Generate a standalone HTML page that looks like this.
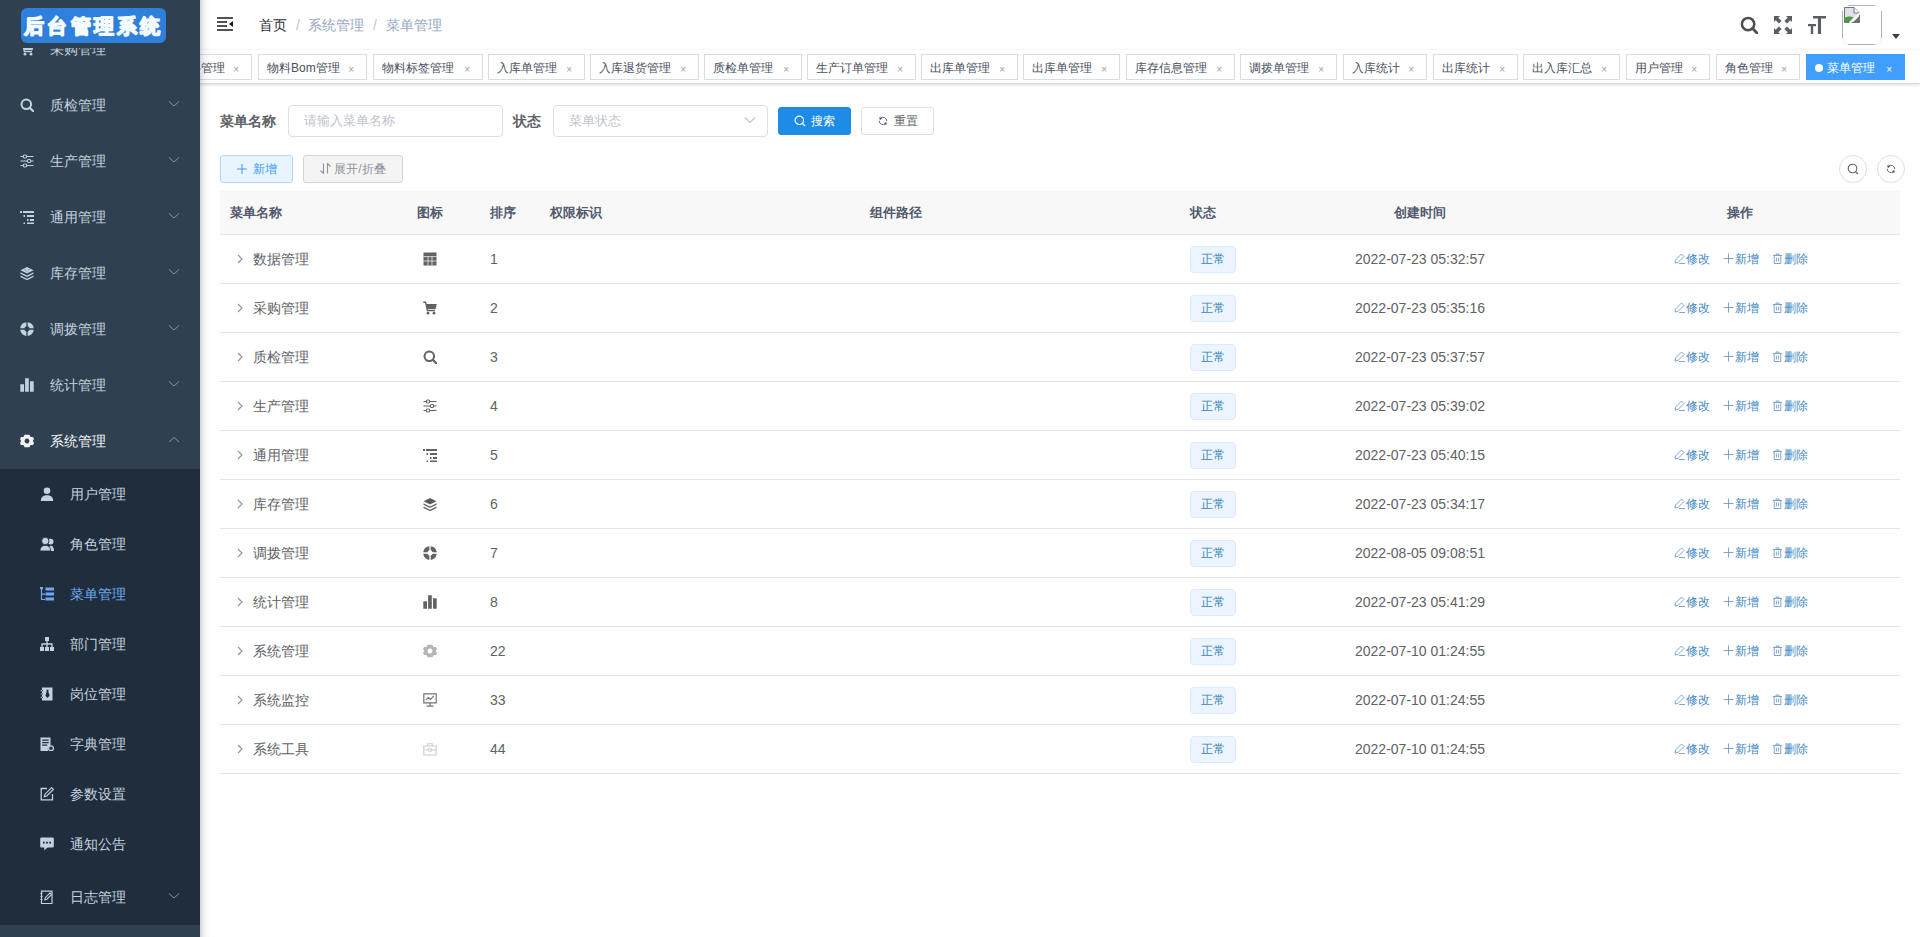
<!DOCTYPE html>
<html><head><meta charset="utf-8"><style>
*{box-sizing:border-box;margin:0;padding:0}
html,body{width:1920px;height:937px;overflow:hidden;background:#fff;font-family:"Liberation Sans",sans-serif;color:#606266}
.abs{position:absolute}
#side{position:absolute;left:0;top:0;width:200px;height:937px;background:#2f4151;overflow:hidden;z-index:5}
#shadow{position:absolute;left:200px;top:0;width:10px;height:937px;background:linear-gradient(to right,rgba(0,21,41,.18),rgba(0,21,41,.06) 40%,rgba(0,21,41,0));z-index:6}
.tx{position:absolute;font-size:14px;white-space:nowrap}
#nav{position:absolute;left:200px;top:0;width:1720px;height:50px;background:#fff}
#tags{position:absolute;left:200px;top:50px;width:1720px;height:34px;background:#fff;border-bottom:1px solid #d8dce5;box-shadow:0 1px 3px 0 rgba(0,0,0,.12),0 0 3px 0 rgba(0,0,0,.04);overflow:hidden}
.tg{position:absolute;top:4px;height:26px;border:1px solid #d8dce5;color:#495060;background:#fff;font-size:12px;line-height:27px;padding-left:8px;white-space:nowrap}
.tg .x{position:absolute;right:12px;top:1px;font-size:10px;color:#9a9ea6}
.tg.act{background:#409eff;border-color:#409eff;color:#fff}
.tg.act .x{color:#fff}
.tg.act:before{content:"";display:inline-block;width:8px;height:8px;border-radius:50%;background:#fff;margin-right:4px;vertical-align:0}
.bc{position:absolute;top:0;line-height:50px;font-size:14px;color:#97a8be}
.lbl{position:absolute;top:105px;line-height:32px;font-size:14px;font-weight:bold;color:#606266}
.inp{position:absolute;top:105px;height:32px;border:1px solid #dcdfe6;border-radius:4px;background:#fff;font-size:13px;color:#c0c4cc;line-height:30px;padding-left:15px}
.btn{position:absolute;height:28px;border-radius:3px;font-size:12px;line-height:26px;text-align:center;border:1px solid #dcdfe6;white-space:nowrap}
.cbtn{position:absolute;top:155px;width:28px;height:28px;border-radius:50%;border:1px solid #dcdfe6;background:#fff}
.th{position:absolute;left:220px;top:191px;width:1680px;height:44px;background:#f8f8f9;border-bottom:1px solid #e3e6e9}
.thx{position:absolute;top:191px;line-height:43px;font-size:13px;font-weight:bold;color:#515a6e;white-space:nowrap}
.tr{position:absolute;left:220px;width:1680px;height:49px;border-bottom:1px solid #e3e6e9;background:#fff}
.td{position:absolute;line-height:48px;font-size:14px;color:#606266;white-space:nowrap}
.tag{position:absolute;left:1190px;width:46px;height:27px;background:#ecf5ff;border:1px solid #d9ecff;border-radius:4px;color:#3a85b5;font-size:12px;line-height:25px;text-align:center}
.op{position:absolute;line-height:48px;font-size:12px;color:#3f88c5;white-space:nowrap}

</style></head><body>
<div id="side">
<div class="tx" style="left:50px;top:21px;line-height:56px;color:#c6d1de">采购管理</div>
<svg class="abs" style="left:20px;top:42px;color:#c6d1de" width="14" height="14" viewBox="0 0 14 14"><path d="M0.3 1.2H2.6L4.4 9.6H12" fill="none" stroke="currentColor" stroke-width="1.4"/><path d="M3.2 3H13.8L12.6 8.2H4.3Z" fill="currentColor"/><circle cx="5" cy="12.2" r="1.4" fill="currentColor"/><circle cx="11" cy="12.2" r="1.4" fill="currentColor"/></svg>
<div class="tx" style="left:50px;top:77px;line-height:56px;color:#c6d1de">质检管理</div>
<svg class="abs" style="left:20px;top:98px;color:#c6d1de" width="14" height="14" viewBox="0 0 14 14"><circle cx="6.3" cy="6.3" r="4.8" fill="none" stroke="currentColor" stroke-width="2"/><path d="M9.8 9.8L13.6 13.6" stroke="currentColor" stroke-width="2.2" stroke-linecap="round"/></svg>
<svg class="abs" style="left:168px;top:100px" width="12" height="8" viewBox="0 0 12 8"><path d="M1 1.5L6 6L11 1.5" fill="none" stroke="#8592a3" stroke-width="1"/></svg>
<div class="tx" style="left:50px;top:133px;line-height:56px;color:#c6d1de">生产管理</div>
<svg class="abs" style="left:20px;top:154px;color:#c6d1de" width="14" height="14" viewBox="0 0 14 14"><path d="M0.5 2.5H3.3M6.7 2.5H13.5M0.5 7H7.3M10.7 7H13.5M0.5 11.5H3.3M6.7 11.5H13.5" stroke="currentColor" stroke-width="1.2"/><rect x="3.3" y="1" width="3.4" height="3" fill="none" stroke="currentColor" stroke-width="1.1" rx="1.2"/><rect x="7.3" y="5.5" width="3.4" height="3" fill="none" stroke="currentColor" stroke-width="1.1" rx="1.2"/><rect x="3.3" y="10" width="3.4" height="3" fill="none" stroke="currentColor" stroke-width="1.1" rx="1.2"/></svg>
<svg class="abs" style="left:168px;top:156px" width="12" height="8" viewBox="0 0 12 8"><path d="M1 1.5L6 6L11 1.5" fill="none" stroke="#8592a3" stroke-width="1"/></svg>
<div class="tx" style="left:50px;top:189px;line-height:56px;color:#c6d1de">通用管理</div>
<svg class="abs" style="left:20px;top:210px;color:#c6d1de" width="14" height="14" viewBox="0 0 14 14"><path d="M0 1h2v2H0zM3 1h11v2H3zM3.5 5H5v2H3.5zM7 5h7v2H7zM7 9h1.5v2H7zM10 9h4v2h-4zM3.5 12.5H5v2H3.5zM7 12.5h7v2H7z" fill="currentColor"/></svg>
<svg class="abs" style="left:168px;top:212px" width="12" height="8" viewBox="0 0 12 8"><path d="M1 1.5L6 6L11 1.5" fill="none" stroke="#8592a3" stroke-width="1"/></svg>
<div class="tx" style="left:50px;top:245px;line-height:56px;color:#c6d1de">库存管理</div>
<svg class="abs" style="left:20px;top:266px;color:#c6d1de" width="14" height="14" viewBox="0 0 14 14"><path d="M7 1L13.5 4.2L7 7.4L0.5 4.2Z" fill="currentColor"/><path d="M0.5 6.3L7 9.5L13.5 6.3V7.8L7 11L0.5 7.8Z" fill="currentColor"/><path d="M0.5 9.6L7 12.8L13.5 9.6V11L7 14.2L0.5 11Z" fill="currentColor"/><path d="M4.5 3.6l1.5 .7M8 4.1l1.5-.7M6.4 5.2l1.2 .6" stroke="#0006" stroke-width="0.9"/></svg>
<svg class="abs" style="left:168px;top:268px" width="12" height="8" viewBox="0 0 12 8"><path d="M1 1.5L6 6L11 1.5" fill="none" stroke="#8592a3" stroke-width="1"/></svg>
<div class="tx" style="left:50px;top:301px;line-height:56px;color:#c6d1de">调拨管理</div>
<svg class="abs" style="left:20px;top:322px;color:#c6d1de" width="14" height="14" viewBox="0 0 14 14"><path fill="currentColor" fill-rule="evenodd" d="M7 0.2A6.8 6.8 0 1 1 6.99 0.2ZM7 4.3A2.7 2.7 0 1 0 7.01 4.3Z"/><path d="M7 0V14M0 7H14" stroke="#2f4151" stroke-width="1.3"/></svg>
<svg class="abs" style="left:168px;top:324px" width="12" height="8" viewBox="0 0 12 8"><path d="M1 1.5L6 6L11 1.5" fill="none" stroke="#8592a3" stroke-width="1"/></svg>
<div class="tx" style="left:50px;top:357px;line-height:56px;color:#c6d1de">统计管理</div>
<svg class="abs" style="left:20px;top:378px;color:#c6d1de" width="14" height="14" viewBox="0 0 14 14"><path d="M0.3 6.3h3.7v7.4H0.3zM5.1 0.3h3.7v13.4H5.1zM10 3.3h3.7v10.4H10z" fill="currentColor"/></svg>
<svg class="abs" style="left:168px;top:380px" width="12" height="8" viewBox="0 0 12 8"><path d="M1 1.5L6 6L11 1.5" fill="none" stroke="#8592a3" stroke-width="1"/></svg>
<div class="tx" style="left:50px;top:413px;line-height:56px;color:#f4f4f5">系统管理</div>
<svg class="abs" style="left:20px;top:434px;color:#f4f4f5" width="14" height="14" viewBox="0 0 14 14"><path fill="currentColor" fill-rule="evenodd" d="M4.6 0.8h4.8l1.2 2.1 2.4 .1 1 2.1-1.2 1.9 1.2 1.9-1 2.1-2.4 .1-1.2 2.1H4.6l-1.2-2.1-2.4-.1-1-2.1L1.2 7 0 5.1l1-2.1 2.4-.1zM7 4.6A2.4 2.4 0 1 0 7.01 4.6Z"/></svg>
<svg class="abs" style="left:168px;top:436px" width="12" height="8" viewBox="0 0 12 8"><path d="M1 6L6 1.5L11 6" fill="none" stroke="#8592a3" stroke-width="1"/></svg>
<div class="abs" style="left:0;top:469px;width:200px;height:456px;background:#1f2d3d"></div>
<div class="tx" style="left:70px;top:469px;line-height:50px;color:#c6d1de">用户管理</div>
<svg class="abs" style="left:40px;top:487px;color:#c6d1de" width="14" height="14" viewBox="0 0 14 14"><circle cx="7" cy="3.8" r="3.3" fill="currentColor"/><path d="M0.8 14C0.8 9.6 3.6 8.2 7 8.2S13.2 9.6 13.2 14Z" fill="currentColor"/></svg>
<div class="tx" style="left:70px;top:519px;line-height:50px;color:#c6d1de">角色管理</div>
<svg class="abs" style="left:40px;top:537px;color:#c6d1de" width="14" height="14" viewBox="0 0 14 14"><circle cx="10.6" cy="4.6" r="2.9" fill="currentColor"/><path d="M8.5 14C8.5 10.2 9.6 8.8 11 8.8S14 10.2 14 14Z" fill="currentColor"/><circle cx="5.3" cy="4" r="3.7" fill="currentColor" stroke="#1f2d3d" stroke-width="0.9"/><path d="M0 14C0 9.8 2.4 8.4 5.3 8.4S10.6 9.8 10.6 14Z" fill="currentColor" stroke="#1f2d3d" stroke-width="0.9"/></svg>
<div class="tx" style="left:70px;top:569px;line-height:50px;color:#6eaaf3">菜单管理</div>
<svg class="abs" style="left:40px;top:587px;color:#6eaaf3" width="14" height="14" viewBox="0 0 14 14"><path d="M1.5 1v12M1.5 7.2H5M1.5 12.5H5" stroke="currentColor" stroke-width="1.2" fill="none"/><rect x="0" y="0" width="3" height="2.2" fill="currentColor"/><path d="M5.5 0.5h8.5v3H5.5zM5.5 5.5h8.5v3H5.5zM5.5 10.5h8.5v3H5.5z" fill="currentColor"/></svg>
<div class="tx" style="left:70px;top:619px;line-height:50px;color:#c6d1de">部门管理</div>
<svg class="abs" style="left:40px;top:637px;color:#c6d1de" width="14" height="14" viewBox="0 0 14 14"><path d="M5 0h4v4H5zM0 10h4v4H0zM5 10h4v4H5zM10 10h4v4h-4z" fill="currentColor"/><path d="M7 4v6M2 10V7h10v3" stroke="currentColor" stroke-width="1.3" fill="none"/></svg>
<div class="tx" style="left:70px;top:669px;line-height:50px;color:#c6d1de">岗位管理</div>
<svg class="abs" style="left:40px;top:687px;color:#c6d1de" width="14" height="14" viewBox="0 0 14 14"><path fill="currentColor" fill-rule="evenodd" d="M2 0.5h10.5v13H2zM0.8 3h2v1.2h-2zM0.8 6.4h2v1.2h-2zM0.8 9.8h2v1.2h-2zM6.2 2.8h2.6l-.6 1.3 1.4 4.7-2.1 2.2-2.1-2.2 1.4-4.7z"/></svg>
<div class="tx" style="left:70px;top:719px;line-height:50px;color:#c6d1de">字典管理</div>
<svg class="abs" style="left:40px;top:737px;color:#c6d1de" width="14" height="14" viewBox="0 0 14 14"><path fill="currentColor" fill-rule="evenodd" d="M0.5 0.5h10v8.2a3.6 3.6 0 0 0-1.8 5.8H0.5zM2.2 2.5h6.5v1.3H2.2zM2.2 5h6.5v1.3H2.2zM2.2 7.5h5v1.3h-5z"/><circle cx="11" cy="11.2" r="2.4" fill="none" stroke="currentColor" stroke-width="1.3"/></svg>
<div class="tx" style="left:70px;top:769px;line-height:50px;color:#c6d1de">参数设置</div>
<svg class="abs" style="left:40px;top:787px;color:#c6d1de" width="14" height="14" viewBox="0 0 14 14"><path d="M7 1.5H1.2v11.3h11.3V7" fill="none" stroke="currentColor" stroke-width="1.3"/><path d="M11.6 0.6l1.8 1.8-6.6 6.6-2.4 .6.6-2.4z" fill="none" stroke="currentColor" stroke-width="1.2"/></svg>
<div class="tx" style="left:70px;top:819px;line-height:50px;color:#c6d1de">通知公告</div>
<svg class="abs" style="left:40px;top:837px;color:#c6d1de" width="14" height="14" viewBox="0 0 14 14"><path fill="currentColor" fill-rule="evenodd" d="M1.5 0.5h11a1.3 1.3 0 0 1 1.3 1.3v7.4a1.3 1.3 0 0 1-1.3 1.3H7.5L4.3 13.6V10.5H1.5A1.3 1.3 0 0 1 .2 9.2V1.8A1.3 1.3 0 0 1 1.5 .5zM3 4.7h1.8v1.8H3zM6.1 4.7h1.8v1.8H6.1zM9.2 4.7h1.8v1.8H9.2z"/></svg>
<div class="tx" style="left:70px;top:872px;line-height:50px;color:#c6d1de">日志管理</div>
<svg class="abs" style="left:40px;top:890px;color:#c6d1de" width="14" height="14" viewBox="0 0 14 14"><path d="M1.5 1.2h10.5v12.3H1.5z" fill="none" stroke="currentColor" stroke-width="1.2"/><path d="M0.5 3.5h2M0.5 6.5h2M0.5 9.5h2" stroke="currentColor" stroke-width="1"/><path d="M10 2.8l1.6 1.6-4.8 4.8-2 .5.5-2z" fill="none" stroke="currentColor" stroke-width="1.1"/></svg>
<svg class="abs" style="left:168px;top:892px" width="12" height="8" viewBox="0 0 12 8"><path d="M1 1.5L6 6L11 1.5" fill="none" stroke="#8592a3" stroke-width="1"/></svg>
<div class="abs" style="left:0;top:0;width:200px;height:48px;background:#2f4151"></div>
<svg class="abs" style="left:0;top:0" width="200" height="50"><rect x="21" y="8" width="145" height="35" rx="6" fill="#2f7fdc"/><text x="24" y="32.8" font-family="Liberation Sans, sans-serif" font-size="20" font-weight="bold" letter-spacing="3.3" fill="#f4fbff" stroke="#f4fbff" stroke-width="1.5" stroke-linejoin="round">后台管理系统</text></svg>
</div>
<div id="nav"></div>
<svg class="abs" style="left:217px;top:17px" width="16" height="14" viewBox="0 0 16 14"><path d="M0 1h16M0 5h10M0 9h10M0 13h16" stroke="#1a1a1a" stroke-width="1.4"/><path d="M16 4V10L12 7Z" fill="#1a1a1a"/></svg>
<div class="bc" style="left:259px;color:#303133">首页</div>
<div class="bc" style="left:296px;color:#c0c4cc">/</div>
<div class="bc" style="left:308px">系统管理</div>
<div class="bc" style="left:373px;color:#c0c4cc">/</div>
<div class="bc" style="left:386px">菜单管理</div>
<svg class="abs" style="left:1740px;top:16px;color:#4d4f53" width="18" height="18" viewBox="0 0 14 14"><circle cx="6.3" cy="6.3" r="4.8" fill="none" stroke="currentColor" stroke-width="2"/><path d="M9.8 9.8L13.6 13.6" stroke="currentColor" stroke-width="2.2" stroke-linecap="round"/></svg>
<svg class="abs" style="left:1774px;top:16px" width="18" height="18" viewBox="0 0 18 18"><g fill="#5a5e66"><path d="M0 0h6L4.3 1.7 7.6 5 5 7.6 1.7 4.3 0 6z"/><path d="M18 0v6l-1.7-1.7L13 7.6 10.4 5l3.3-3.3L12 0z"/><path d="M0 18v-6l1.7 1.7L5 10.4 7.6 13l-3.3 3.3L6 18z"/><path d="M18 18h-6l1.7-1.7L10.4 13 13 10.4l3.3 3.3L18 12z"/></g></svg>
<svg class="abs" style="left:1808px;top:16px" width="19" height="18" viewBox="0 0 19 18"><path d="M5 0h13v2.6h-5V18H9.9V2.6H5zM0 8h8v2.3H5.2V18H2.8V10.3H0z" fill="#5a5e66"/></svg>
<svg class="abs" style="left:1838px;top:0" width="50" height="50" viewBox="0 0 50 50"><path d="M10 5.5H37M10 44.5H37M4.5 11V38M43.5 11V38" stroke="#b0b2b5" stroke-width="1"/><path d="M4.5 11Q4.5 5.5 10 5.5M37 5.5Q43.5 5.5 43.5 11M43.5 38Q43.5 44.5 37 44.5M10 44.5Q4.5 44.5 4.5 38" fill="none" stroke="#f3f3f4" stroke-width="1"/></svg>
<svg class="abs" style="left:1844px;top:7px" width="16" height="16" viewBox="0 0 16 16"><path d="M0.5 0.5H10L15.5 6V15.5H0.5Z" fill="#dde2ea" stroke="#707378" stroke-width="1"/><path d="M10 0.5V6H15.5" fill="#fff" stroke="#707378" stroke-width="1"/><path d="M0.5 11C3 9.3 6.5 9 9.5 10.2L4.8 15.5H0.5Z" fill="#4c9a3a"/><path d="M9 15.5L15.5 9V15.5Z" fill="#6b6f74"/><path d="M5.5 16.5L16.5 5.5" stroke="#fff" stroke-width="1.6"/></svg>
<svg class="abs" style="left:1892px;top:34px" width="8" height="5" viewBox="0 0 8 5"><path d="M0 0h8L4 5z" fill="#3c3f44"/></svg>
<div id="tags">
<div class="tg" style="left:-32px;width:84px">物料管理<span class="x">×</span></div>
<div class="tg" style="left:58px;width:109px">物料Bom管理<span class="x">×</span></div>
<div class="tg" style="left:173px;width:110px">物料标签管理<span class="x">×</span></div>
<div class="tg" style="left:288px;width:97px">入库单管理<span class="x">×</span></div>
<div class="tg" style="left:390px;width:109px">入库退货管理<span class="x">×</span></div>
<div class="tg" style="left:504px;width:98px">质检单管理<span class="x">×</span></div>
<div class="tg" style="left:607px;width:109px">生产订单管理<span class="x">×</span></div>
<div class="tg" style="left:721px;width:97px">出库单管理<span class="x">×</span></div>
<div class="tg" style="left:823px;width:97px">出库单管理<span class="x">×</span></div>
<div class="tg" style="left:926px;width:109px">库存信息管理<span class="x">×</span></div>
<div class="tg" style="left:1040px;width:97px">调拨单管理<span class="x">×</span></div>
<div class="tg" style="left:1143px;width:84px">入库统计<span class="x">×</span></div>
<div class="tg" style="left:1233px;width:85px">出库统计<span class="x">×</span></div>
<div class="tg" style="left:1323px;width:97px">出入库汇总<span class="x">×</span></div>
<div class="tg" style="left:1426px;width:84px">用户管理<span class="x">×</span></div>
<div class="tg" style="left:1516px;width:84px">角色管理<span class="x">×</span></div>
<div class="tg act" style="left:1606px;width:99px">菜单管理<span class="x">×</span></div>
</div>
<div class="lbl" style="left:220px">菜单名称</div>
<div class="inp" style="left:288px;width:215px">请输入菜单名称</div>
<div class="lbl" style="left:513px">状态</div>
<div class="inp" style="left:553px;width:215px">菜单状态</div>
<svg class="abs" style="left:744px;top:116px" width="12" height="8" viewBox="0 0 12 8"><path d="M1 1.5L6 6.5L11 1.5" fill="none" stroke="#c0c4cc" stroke-width="1.1"/></svg>
<div class="btn" style="left:778px;top:107px;width:73px;background:#1e8ce6;border-color:#1e8ce6;color:#fff"><span style="padding-left:16px">搜索</span></div>
<svg class="abs" style="left:794px;top:115px" width="12" height="12" viewBox="0 0 12 12"><circle cx="5.3" cy="5.3" r="4.2" fill="none" stroke="#fff" stroke-width="1.2"/><path d="M8.3 8.3L11 11" stroke="#fff" stroke-width="1.3"/></svg>
<div class="btn" style="left:861px;top:107px;width:73px;background:#fff;color:#606266"><span style="padding-left:16px">重置</span></div>
<svg class="abs" style="left:877px;top:115px" width="12" height="12" viewBox="0 0 12 12"><path d="M3.4 3.4A3.8 3.8 0 0 1 9.8 6.2M8.6 8.6A3.8 3.8 0 0 1 2.2 5.8" fill="none" stroke="#666" stroke-width="1"/><path d="M2.2 2.2L5.2 2.9L2.9 5.2Z M9.8 9.8L6.8 9.1L9.1 6.8Z" fill="#555"/></svg>
<div class="btn" style="left:220px;top:155px;width:73px;background:#e8f4fe;border-color:#b3d8ff;color:#409eff"><span style="padding-left:16px">新增</span></div>
<svg class="abs" style="left:237px;top:164px" width="10" height="10" viewBox="0 0 10 10"><path d="M5 0V10M0 5H10" stroke="#409eff" stroke-width="1.1"/></svg>
<div class="btn" style="left:303px;top:155px;width:100px;background:#f4f4f5;border-color:#d3d4d6;color:#909399"><span style="padding-left:14px">展开/折叠</span></div>
<svg class="abs" style="left:320px;top:163px" width="11" height="11" viewBox="0 0 11 11"><path d="M3.5 0.5V10.5L0.5 7.5M7.5 10.5V0.5L10.5 3.5" fill="none" stroke="#909399" stroke-width="1.1"/></svg>
<div class="cbtn" style="left:1839px"></div>
<svg class="abs" style="left:1847px;top:163px" width="12" height="12" viewBox="0 0 12 12"><circle cx="5.5" cy="5.5" r="4.3" fill="none" stroke="#606266" stroke-width="1.1"/><path d="M8.6 8.6L11 11" stroke="#606266" stroke-width="1.2"/></svg>
<div class="cbtn" style="left:1877px"></div>
<svg class="abs" style="left:1885px;top:163px" width="12" height="12" viewBox="0 0 12 12"><path d="M3.4 3.4A3.8 3.8 0 0 1 9.8 6.2M8.6 8.6A3.8 3.8 0 0 1 2.2 5.8" fill="none" stroke="#666" stroke-width="1"/><path d="M2.2 2.2L5.2 2.9L2.9 5.2Z M9.8 9.8L6.8 9.1L9.1 6.8Z" fill="#555"/></svg>
<div class="th"></div>
<div class="thx" style="left:230px">菜单名称</div>
<div class="thx" style="left:417px">图标</div>
<div class="thx" style="left:490px">排序</div>
<div class="thx" style="left:550px">权限标识</div>
<div class="thx" style="left:870px">组件路径</div>
<div class="thx" style="left:1190px">状态</div>
<div class="thx" style="left:1394px">创建时间</div>
<div class="thx" style="left:1727px">操作</div>
<div class="tr" style="top:235px"></div>
<svg class="abs" style="left:235px;top:254px" width="10" height="10" viewBox="0 0 10 10"><path d="M3 1L7 5L3 9" fill="none" stroke="#909399" stroke-width="1.1"/></svg>
<div class="td" style="left:253px;top:235px">数据管理</div>
<svg class="abs" style="left:423px;top:252px;color:#606266" width="14" height="14" viewBox="0 0 14 14"><path fill="currentColor" d="M0.5 0.5h13v13H0.5z"/><path d="M0.5 4.6H13.5M0.5 9H13.5M5 4.6V13.5M9 4.6V13.5" stroke="#fff" stroke-width="0.7"/></svg>
<div class="td" style="left:490px;top:235px">1</div>
<div class="tag" style="top:246px">正常</div>
<div class="td" style="left:1355px;top:235px">2022-07-23 05:32:57</div>
<svg class="abs" style="left:1674px;top:253px" width="11" height="11" viewBox="0 0 11 11"><path d="M7.5 1l2.5 2.5-6 6-3 .5.5-3z" fill="none" stroke="#6f9cc8" stroke-width="0.9"/><path d="M5 10.5h6" stroke="#6f9cc8" stroke-width="0.9"/></svg>
<div class="op" style="left:1686px;top:235px">修改</div>
<svg class="abs" style="left:1723px;top:253px" width="11" height="11" viewBox="0 0 11 11"><path d="M5.5 0.5V10.5M0.5 5.5H10.5" stroke="#6f9cc8" stroke-width="0.9"/></svg>
<div class="op" style="left:1735px;top:235px">新增</div>
<svg class="abs" style="left:1772px;top:253px" width="11" height="11" viewBox="0 0 11 11"><path d="M1 2.5h9M4 2.5V1h3v1.5M2.2 2.5V10.5h6.6V2.5M4.4 4.5v4M6.6 4.5v4" fill="none" stroke="#6f9cc8" stroke-width="0.9"/></svg>
<div class="op" style="left:1784px;top:235px">删除</div>
<div class="tr" style="top:284px"></div>
<svg class="abs" style="left:235px;top:303px" width="10" height="10" viewBox="0 0 10 10"><path d="M3 1L7 5L3 9" fill="none" stroke="#909399" stroke-width="1.1"/></svg>
<div class="td" style="left:253px;top:284px">采购管理</div>
<svg class="abs" style="left:423px;top:301px;color:#606266" width="14" height="14" viewBox="0 0 14 14"><path d="M0.3 1.2H2.6L4.4 9.6H12" fill="none" stroke="currentColor" stroke-width="1.4"/><path d="M3.2 3H13.8L12.6 8.2H4.3Z" fill="currentColor"/><circle cx="5" cy="12.2" r="1.4" fill="currentColor"/><circle cx="11" cy="12.2" r="1.4" fill="currentColor"/></svg>
<div class="td" style="left:490px;top:284px">2</div>
<div class="tag" style="top:295px">正常</div>
<div class="td" style="left:1355px;top:284px">2022-07-23 05:35:16</div>
<svg class="abs" style="left:1674px;top:302px" width="11" height="11" viewBox="0 0 11 11"><path d="M7.5 1l2.5 2.5-6 6-3 .5.5-3z" fill="none" stroke="#6f9cc8" stroke-width="0.9"/><path d="M5 10.5h6" stroke="#6f9cc8" stroke-width="0.9"/></svg>
<div class="op" style="left:1686px;top:284px">修改</div>
<svg class="abs" style="left:1723px;top:302px" width="11" height="11" viewBox="0 0 11 11"><path d="M5.5 0.5V10.5M0.5 5.5H10.5" stroke="#6f9cc8" stroke-width="0.9"/></svg>
<div class="op" style="left:1735px;top:284px">新增</div>
<svg class="abs" style="left:1772px;top:302px" width="11" height="11" viewBox="0 0 11 11"><path d="M1 2.5h9M4 2.5V1h3v1.5M2.2 2.5V10.5h6.6V2.5M4.4 4.5v4M6.6 4.5v4" fill="none" stroke="#6f9cc8" stroke-width="0.9"/></svg>
<div class="op" style="left:1784px;top:284px">删除</div>
<div class="tr" style="top:333px"></div>
<svg class="abs" style="left:235px;top:352px" width="10" height="10" viewBox="0 0 10 10"><path d="M3 1L7 5L3 9" fill="none" stroke="#909399" stroke-width="1.1"/></svg>
<div class="td" style="left:253px;top:333px">质检管理</div>
<svg class="abs" style="left:423px;top:350px;color:#606266" width="14" height="14" viewBox="0 0 14 14"><circle cx="6.3" cy="6.3" r="4.8" fill="none" stroke="currentColor" stroke-width="2"/><path d="M9.8 9.8L13.6 13.6" stroke="currentColor" stroke-width="2.2" stroke-linecap="round"/></svg>
<div class="td" style="left:490px;top:333px">3</div>
<div class="tag" style="top:344px">正常</div>
<div class="td" style="left:1355px;top:333px">2022-07-23 05:37:57</div>
<svg class="abs" style="left:1674px;top:351px" width="11" height="11" viewBox="0 0 11 11"><path d="M7.5 1l2.5 2.5-6 6-3 .5.5-3z" fill="none" stroke="#6f9cc8" stroke-width="0.9"/><path d="M5 10.5h6" stroke="#6f9cc8" stroke-width="0.9"/></svg>
<div class="op" style="left:1686px;top:333px">修改</div>
<svg class="abs" style="left:1723px;top:351px" width="11" height="11" viewBox="0 0 11 11"><path d="M5.5 0.5V10.5M0.5 5.5H10.5" stroke="#6f9cc8" stroke-width="0.9"/></svg>
<div class="op" style="left:1735px;top:333px">新增</div>
<svg class="abs" style="left:1772px;top:351px" width="11" height="11" viewBox="0 0 11 11"><path d="M1 2.5h9M4 2.5V1h3v1.5M2.2 2.5V10.5h6.6V2.5M4.4 4.5v4M6.6 4.5v4" fill="none" stroke="#6f9cc8" stroke-width="0.9"/></svg>
<div class="op" style="left:1784px;top:333px">删除</div>
<div class="tr" style="top:382px"></div>
<svg class="abs" style="left:235px;top:401px" width="10" height="10" viewBox="0 0 10 10"><path d="M3 1L7 5L3 9" fill="none" stroke="#909399" stroke-width="1.1"/></svg>
<div class="td" style="left:253px;top:382px">生产管理</div>
<svg class="abs" style="left:423px;top:399px;color:#606266" width="14" height="14" viewBox="0 0 14 14"><path d="M0.5 2.5H3.3M6.7 2.5H13.5M0.5 7H7.3M10.7 7H13.5M0.5 11.5H3.3M6.7 11.5H13.5" stroke="currentColor" stroke-width="1.2"/><rect x="3.3" y="1" width="3.4" height="3" fill="none" stroke="currentColor" stroke-width="1.1" rx="1.2"/><rect x="7.3" y="5.5" width="3.4" height="3" fill="none" stroke="currentColor" stroke-width="1.1" rx="1.2"/><rect x="3.3" y="10" width="3.4" height="3" fill="none" stroke="currentColor" stroke-width="1.1" rx="1.2"/></svg>
<div class="td" style="left:490px;top:382px">4</div>
<div class="tag" style="top:393px">正常</div>
<div class="td" style="left:1355px;top:382px">2022-07-23 05:39:02</div>
<svg class="abs" style="left:1674px;top:400px" width="11" height="11" viewBox="0 0 11 11"><path d="M7.5 1l2.5 2.5-6 6-3 .5.5-3z" fill="none" stroke="#6f9cc8" stroke-width="0.9"/><path d="M5 10.5h6" stroke="#6f9cc8" stroke-width="0.9"/></svg>
<div class="op" style="left:1686px;top:382px">修改</div>
<svg class="abs" style="left:1723px;top:400px" width="11" height="11" viewBox="0 0 11 11"><path d="M5.5 0.5V10.5M0.5 5.5H10.5" stroke="#6f9cc8" stroke-width="0.9"/></svg>
<div class="op" style="left:1735px;top:382px">新增</div>
<svg class="abs" style="left:1772px;top:400px" width="11" height="11" viewBox="0 0 11 11"><path d="M1 2.5h9M4 2.5V1h3v1.5M2.2 2.5V10.5h6.6V2.5M4.4 4.5v4M6.6 4.5v4" fill="none" stroke="#6f9cc8" stroke-width="0.9"/></svg>
<div class="op" style="left:1784px;top:382px">删除</div>
<div class="tr" style="top:431px"></div>
<svg class="abs" style="left:235px;top:450px" width="10" height="10" viewBox="0 0 10 10"><path d="M3 1L7 5L3 9" fill="none" stroke="#909399" stroke-width="1.1"/></svg>
<div class="td" style="left:253px;top:431px">通用管理</div>
<svg class="abs" style="left:423px;top:448px;color:#606266" width="14" height="14" viewBox="0 0 14 14"><path d="M0 1h2v2H0zM3 1h11v2H3zM3.5 5H5v2H3.5zM7 5h7v2H7zM7 9h1.5v2H7zM10 9h4v2h-4zM3.5 12.5H5v2H3.5zM7 12.5h7v2H7z" fill="currentColor"/></svg>
<div class="td" style="left:490px;top:431px">5</div>
<div class="tag" style="top:442px">正常</div>
<div class="td" style="left:1355px;top:431px">2022-07-23 05:40:15</div>
<svg class="abs" style="left:1674px;top:449px" width="11" height="11" viewBox="0 0 11 11"><path d="M7.5 1l2.5 2.5-6 6-3 .5.5-3z" fill="none" stroke="#6f9cc8" stroke-width="0.9"/><path d="M5 10.5h6" stroke="#6f9cc8" stroke-width="0.9"/></svg>
<div class="op" style="left:1686px;top:431px">修改</div>
<svg class="abs" style="left:1723px;top:449px" width="11" height="11" viewBox="0 0 11 11"><path d="M5.5 0.5V10.5M0.5 5.5H10.5" stroke="#6f9cc8" stroke-width="0.9"/></svg>
<div class="op" style="left:1735px;top:431px">新增</div>
<svg class="abs" style="left:1772px;top:449px" width="11" height="11" viewBox="0 0 11 11"><path d="M1 2.5h9M4 2.5V1h3v1.5M2.2 2.5V10.5h6.6V2.5M4.4 4.5v4M6.6 4.5v4" fill="none" stroke="#6f9cc8" stroke-width="0.9"/></svg>
<div class="op" style="left:1784px;top:431px">删除</div>
<div class="tr" style="top:480px"></div>
<svg class="abs" style="left:235px;top:499px" width="10" height="10" viewBox="0 0 10 10"><path d="M3 1L7 5L3 9" fill="none" stroke="#909399" stroke-width="1.1"/></svg>
<div class="td" style="left:253px;top:480px">库存管理</div>
<svg class="abs" style="left:423px;top:497px;color:#606266" width="14" height="14" viewBox="0 0 14 14"><path d="M7 1L13.5 4.2L7 7.4L0.5 4.2Z" fill="currentColor"/><path d="M0.5 6.3L7 9.5L13.5 6.3V7.8L7 11L0.5 7.8Z" fill="currentColor"/><path d="M0.5 9.6L7 12.8L13.5 9.6V11L7 14.2L0.5 11Z" fill="currentColor"/><path d="M4.5 3.6l1.5 .7M8 4.1l1.5-.7M6.4 5.2l1.2 .6" stroke="#0006" stroke-width="0.9"/></svg>
<div class="td" style="left:490px;top:480px">6</div>
<div class="tag" style="top:491px">正常</div>
<div class="td" style="left:1355px;top:480px">2022-07-23 05:34:17</div>
<svg class="abs" style="left:1674px;top:498px" width="11" height="11" viewBox="0 0 11 11"><path d="M7.5 1l2.5 2.5-6 6-3 .5.5-3z" fill="none" stroke="#6f9cc8" stroke-width="0.9"/><path d="M5 10.5h6" stroke="#6f9cc8" stroke-width="0.9"/></svg>
<div class="op" style="left:1686px;top:480px">修改</div>
<svg class="abs" style="left:1723px;top:498px" width="11" height="11" viewBox="0 0 11 11"><path d="M5.5 0.5V10.5M0.5 5.5H10.5" stroke="#6f9cc8" stroke-width="0.9"/></svg>
<div class="op" style="left:1735px;top:480px">新增</div>
<svg class="abs" style="left:1772px;top:498px" width="11" height="11" viewBox="0 0 11 11"><path d="M1 2.5h9M4 2.5V1h3v1.5M2.2 2.5V10.5h6.6V2.5M4.4 4.5v4M6.6 4.5v4" fill="none" stroke="#6f9cc8" stroke-width="0.9"/></svg>
<div class="op" style="left:1784px;top:480px">删除</div>
<div class="tr" style="top:529px"></div>
<svg class="abs" style="left:235px;top:548px" width="10" height="10" viewBox="0 0 10 10"><path d="M3 1L7 5L3 9" fill="none" stroke="#909399" stroke-width="1.1"/></svg>
<div class="td" style="left:253px;top:529px">调拨管理</div>
<svg class="abs" style="left:423px;top:546px;color:#606266" width="14" height="14" viewBox="0 0 14 14"><path fill="currentColor" fill-rule="evenodd" d="M7 0.2A6.8 6.8 0 1 1 6.99 0.2ZM7 4.3A2.7 2.7 0 1 0 7.01 4.3Z"/><path d="M7 0V14M0 7H14" stroke="#fff" stroke-width="1.3"/></svg>
<div class="td" style="left:490px;top:529px">7</div>
<div class="tag" style="top:540px">正常</div>
<div class="td" style="left:1355px;top:529px">2022-08-05 09:08:51</div>
<svg class="abs" style="left:1674px;top:547px" width="11" height="11" viewBox="0 0 11 11"><path d="M7.5 1l2.5 2.5-6 6-3 .5.5-3z" fill="none" stroke="#6f9cc8" stroke-width="0.9"/><path d="M5 10.5h6" stroke="#6f9cc8" stroke-width="0.9"/></svg>
<div class="op" style="left:1686px;top:529px">修改</div>
<svg class="abs" style="left:1723px;top:547px" width="11" height="11" viewBox="0 0 11 11"><path d="M5.5 0.5V10.5M0.5 5.5H10.5" stroke="#6f9cc8" stroke-width="0.9"/></svg>
<div class="op" style="left:1735px;top:529px">新增</div>
<svg class="abs" style="left:1772px;top:547px" width="11" height="11" viewBox="0 0 11 11"><path d="M1 2.5h9M4 2.5V1h3v1.5M2.2 2.5V10.5h6.6V2.5M4.4 4.5v4M6.6 4.5v4" fill="none" stroke="#6f9cc8" stroke-width="0.9"/></svg>
<div class="op" style="left:1784px;top:529px">删除</div>
<div class="tr" style="top:578px"></div>
<svg class="abs" style="left:235px;top:597px" width="10" height="10" viewBox="0 0 10 10"><path d="M3 1L7 5L3 9" fill="none" stroke="#909399" stroke-width="1.1"/></svg>
<div class="td" style="left:253px;top:578px">统计管理</div>
<svg class="abs" style="left:423px;top:595px;color:#606266" width="14" height="14" viewBox="0 0 14 14"><path d="M0.3 6.3h3.7v7.4H0.3zM5.1 0.3h3.7v13.4H5.1zM10 3.3h3.7v10.4H10z" fill="currentColor"/></svg>
<div class="td" style="left:490px;top:578px">8</div>
<div class="tag" style="top:589px">正常</div>
<div class="td" style="left:1355px;top:578px">2022-07-23 05:41:29</div>
<svg class="abs" style="left:1674px;top:596px" width="11" height="11" viewBox="0 0 11 11"><path d="M7.5 1l2.5 2.5-6 6-3 .5.5-3z" fill="none" stroke="#6f9cc8" stroke-width="0.9"/><path d="M5 10.5h6" stroke="#6f9cc8" stroke-width="0.9"/></svg>
<div class="op" style="left:1686px;top:578px">修改</div>
<svg class="abs" style="left:1723px;top:596px" width="11" height="11" viewBox="0 0 11 11"><path d="M5.5 0.5V10.5M0.5 5.5H10.5" stroke="#6f9cc8" stroke-width="0.9"/></svg>
<div class="op" style="left:1735px;top:578px">新增</div>
<svg class="abs" style="left:1772px;top:596px" width="11" height="11" viewBox="0 0 11 11"><path d="M1 2.5h9M4 2.5V1h3v1.5M2.2 2.5V10.5h6.6V2.5M4.4 4.5v4M6.6 4.5v4" fill="none" stroke="#6f9cc8" stroke-width="0.9"/></svg>
<div class="op" style="left:1784px;top:578px">删除</div>
<div class="tr" style="top:627px"></div>
<svg class="abs" style="left:235px;top:646px" width="10" height="10" viewBox="0 0 10 10"><path d="M3 1L7 5L3 9" fill="none" stroke="#909399" stroke-width="1.1"/></svg>
<div class="td" style="left:253px;top:627px">系统管理</div>
<svg class="abs" style="left:423px;top:644px;color:#b4b6ba" width="14" height="14" viewBox="0 0 14 14"><path fill="currentColor" fill-rule="evenodd" d="M4.6 0.8h4.8l1.2 2.1 2.4 .1 1 2.1-1.2 1.9 1.2 1.9-1 2.1-2.4 .1-1.2 2.1H4.6l-1.2-2.1-2.4-.1-1-2.1L1.2 7 0 5.1l1-2.1 2.4-.1zM7 4.6A2.4 2.4 0 1 0 7.01 4.6Z"/></svg>
<div class="td" style="left:490px;top:627px">22</div>
<div class="tag" style="top:638px">正常</div>
<div class="td" style="left:1355px;top:627px">2022-07-10 01:24:55</div>
<svg class="abs" style="left:1674px;top:645px" width="11" height="11" viewBox="0 0 11 11"><path d="M7.5 1l2.5 2.5-6 6-3 .5.5-3z" fill="none" stroke="#6f9cc8" stroke-width="0.9"/><path d="M5 10.5h6" stroke="#6f9cc8" stroke-width="0.9"/></svg>
<div class="op" style="left:1686px;top:627px">修改</div>
<svg class="abs" style="left:1723px;top:645px" width="11" height="11" viewBox="0 0 11 11"><path d="M5.5 0.5V10.5M0.5 5.5H10.5" stroke="#6f9cc8" stroke-width="0.9"/></svg>
<div class="op" style="left:1735px;top:627px">新增</div>
<svg class="abs" style="left:1772px;top:645px" width="11" height="11" viewBox="0 0 11 11"><path d="M1 2.5h9M4 2.5V1h3v1.5M2.2 2.5V10.5h6.6V2.5M4.4 4.5v4M6.6 4.5v4" fill="none" stroke="#6f9cc8" stroke-width="0.9"/></svg>
<div class="op" style="left:1784px;top:627px">删除</div>
<div class="tr" style="top:676px"></div>
<svg class="abs" style="left:235px;top:695px" width="10" height="10" viewBox="0 0 10 10"><path d="M3 1L7 5L3 9" fill="none" stroke="#909399" stroke-width="1.1"/></svg>
<div class="td" style="left:253px;top:676px">系统监控</div>
<svg class="abs" style="left:423px;top:693px;color:#707378" width="14" height="14" viewBox="0 0 14 14"><path d="M0.8 0.8h12.4v9H0.8z" fill="none" stroke="currentColor" stroke-width="1.2"/><path d="M2.8 7L5.2 4.4 7.4 6.4 10.8 2.8" fill="none" stroke="currentColor" stroke-width="1.1"/><path d="M7 9.8v3M3.5 13.2h7" stroke="currentColor" stroke-width="1.2"/></svg>
<div class="td" style="left:490px;top:676px">33</div>
<div class="tag" style="top:687px">正常</div>
<div class="td" style="left:1355px;top:676px">2022-07-10 01:24:55</div>
<svg class="abs" style="left:1674px;top:694px" width="11" height="11" viewBox="0 0 11 11"><path d="M7.5 1l2.5 2.5-6 6-3 .5.5-3z" fill="none" stroke="#6f9cc8" stroke-width="0.9"/><path d="M5 10.5h6" stroke="#6f9cc8" stroke-width="0.9"/></svg>
<div class="op" style="left:1686px;top:676px">修改</div>
<svg class="abs" style="left:1723px;top:694px" width="11" height="11" viewBox="0 0 11 11"><path d="M5.5 0.5V10.5M0.5 5.5H10.5" stroke="#6f9cc8" stroke-width="0.9"/></svg>
<div class="op" style="left:1735px;top:676px">新增</div>
<svg class="abs" style="left:1772px;top:694px" width="11" height="11" viewBox="0 0 11 11"><path d="M1 2.5h9M4 2.5V1h3v1.5M2.2 2.5V10.5h6.6V2.5M4.4 4.5v4M6.6 4.5v4" fill="none" stroke="#6f9cc8" stroke-width="0.9"/></svg>
<div class="op" style="left:1784px;top:676px">删除</div>
<div class="tr" style="top:725px"></div>
<svg class="abs" style="left:235px;top:744px" width="10" height="10" viewBox="0 0 10 10"><path d="M3 1L7 5L3 9" fill="none" stroke="#909399" stroke-width="1.1"/></svg>
<div class="td" style="left:253px;top:725px">系统工具</div>
<svg class="abs" style="left:423px;top:742px;color:#c9cbcf" width="14" height="14" viewBox="0 0 14 14"><path d="M0.8 4h12.4v9H0.8zM4.8 4V1.8h4.4V4M0.8 8h4.5M8.7 8h4.5" fill="none" stroke="currentColor" stroke-width="1.1"/><path d="M5.3 6.8h3.4v2.4H5.3z" fill="none" stroke="currentColor" stroke-width="1"/></svg>
<div class="td" style="left:490px;top:725px">44</div>
<div class="tag" style="top:736px">正常</div>
<div class="td" style="left:1355px;top:725px">2022-07-10 01:24:55</div>
<svg class="abs" style="left:1674px;top:743px" width="11" height="11" viewBox="0 0 11 11"><path d="M7.5 1l2.5 2.5-6 6-3 .5.5-3z" fill="none" stroke="#6f9cc8" stroke-width="0.9"/><path d="M5 10.5h6" stroke="#6f9cc8" stroke-width="0.9"/></svg>
<div class="op" style="left:1686px;top:725px">修改</div>
<svg class="abs" style="left:1723px;top:743px" width="11" height="11" viewBox="0 0 11 11"><path d="M5.5 0.5V10.5M0.5 5.5H10.5" stroke="#6f9cc8" stroke-width="0.9"/></svg>
<div class="op" style="left:1735px;top:725px">新增</div>
<svg class="abs" style="left:1772px;top:743px" width="11" height="11" viewBox="0 0 11 11"><path d="M1 2.5h9M4 2.5V1h3v1.5M2.2 2.5V10.5h6.6V2.5M4.4 4.5v4M6.6 4.5v4" fill="none" stroke="#6f9cc8" stroke-width="0.9"/></svg>
<div class="op" style="left:1784px;top:725px">删除</div>
<div id="shadow"></div>
</body></html>
